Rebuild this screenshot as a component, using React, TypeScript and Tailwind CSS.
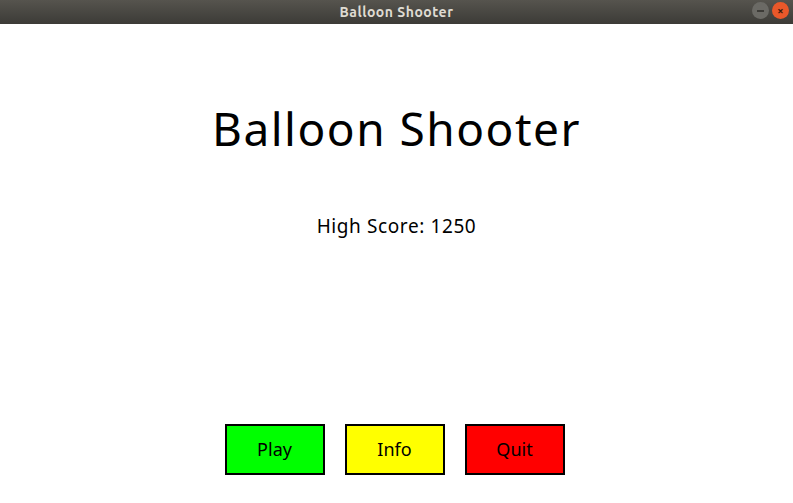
const font = { fontFamily: '"Comic Sans MS", "Noto Sans", sans-serif' };

function TitleBar() {
  return (
    <div className="relative h-6 flex items-center justify-center bg-gradient-to-b from-[#56544e] to-[#3c3b37]">
      <span className="text-[14px] font-bold tracking-[0.5px] text-[#dfdbd2]" style={{ fontFamily: '"Ubuntu", "Noto Sans", sans-serif' }}>
        Balloon Shooter
      </span>
      <div className="absolute right-[4px] top-[2px] flex items-center gap-[3px]">
        <div className="w-[17px] h-[17px] rounded-full bg-[#6b6a65] flex items-center justify-center">
          <div className="w-[7px] h-[2px] bg-[#3c3b37]" />
        </div>
        <div className="w-[17px] h-[17px] rounded-full bg-[#e9582a] flex items-center justify-center text-[#3c1a0c] text-[11px] leading-none font-bold">
          ×
        </div>
      </div>
    </div>
  );
}

function MenuButton({ label, color }: { label: string; color: string }) {
  return (
    <button className={`w-[100px] h-[51px] border-2 border-black flex items-center justify-center text-[18px] text-black ${color}`} style={font}>
      {label}
    </button>
  );
}

export default function App() {
  return (
    <div className="w-[793px] h-[503px] flex flex-col bg-white overflow-hidden">
      <TitleBar />
      <div className="flex-1 flex flex-col items-center" style={font}>
        <h1 className="mt-[74px] h-[60px] leading-[60px] text-[46px] tracking-[1.5px] text-black">Balloon Shooter</h1>
        <p className="mt-[54px] h-[28px] leading-[28px] text-[19px] tracking-[0.6px] text-black">High Score: 1250</p>
        <div className="mt-auto mb-[28px] mr-[4px] flex gap-[20px]">
          <MenuButton label="Play" color="bg-[#00ff00]" />
          <MenuButton label="Info" color="bg-[#ffff00]" />
          <MenuButton label="Quit" color="bg-[#ff0000]" />
        </div>
      </div>
    </div>
  );
}
